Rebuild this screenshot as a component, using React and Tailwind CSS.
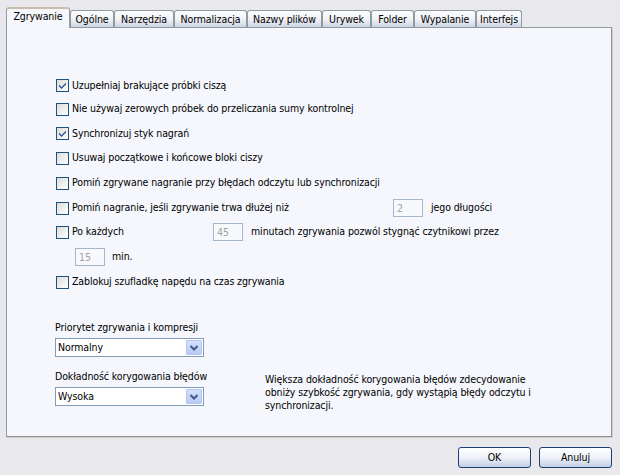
import React from "react";

const FONT = "font-['DejaVu_Sans_Condensed','Liberation_Sans','Arial',sans-serif]";

function Check({ checked }) {
  return (
    <div className="w-[13px] h-[13px] shrink-0 border border-[#1c5180] bg-linear-to-br from-[#dcdcd7] to-[#ffffff] flex items-center justify-center">
      {checked && (
        <svg width="9" height="9" viewBox="0 0 9 9">
          <path d="M1 3.5 L3.5 6 L8 1.5 L8 3.5 L3.5 8 L1 5.5 Z" fill="#2d5a91" />
        </svg>
      )}
    </div>
  );
}

function CheckRow({ checked, label, h }) {
  return (
    <div className={`flex items-center ${h}`}>
      <Check checked={checked} />
      <span className="ml-[3px]">{label}</span>
    </div>
  );
}

function NumBox({ value }) {
  return (
    <div className="w-[30px] h-[18px] shrink-0 border border-[#a5b6cc] bg-[#f8f9fd] text-[#a3a3a3] pl-[3px] flex items-center leading-none">
      {value}
    </div>
  );
}

function Select({ value }) {
  return (
    <div className="w-[149px] h-[19px] border border-[#7f9db9] bg-white flex items-stretch justify-between">
      <span className="pl-[2px] flex items-center">{value}</span>
      <div className="w-[16px] m-[1px] bg-linear-to-b from-[#d4e0fb] to-[#b9cbf3] border border-[#b4c6ef] rounded-[1px] flex items-center justify-center">
        <svg width="8" height="6" viewBox="0 0 8 6">
          <path d="M0.5 1 L4 4.5 L7.5 1" stroke="#3f5a87" strokeWidth="2" fill="none" />
        </svg>
      </div>
    </div>
  );
}

const tabs = [
  ["Ogólne", "w-[44px]"],
  ["Narzędzia", "w-[60px]"],
  ["Normalizacja", "w-[73px]"],
  ["Nazwy plików", "w-[75px]"],
  ["Urywek", "w-[49px]"],
  ["Folder", "w-[43px]"],
  ["Wypalanie", "w-[62px]"],
  ["Interfejs", "w-[46px]"],
];

function Button({ label }) {
  return (
    <div className="w-[73px] h-[21px] border border-[#1d3f73] rounded-[3px] bg-linear-to-b from-[#ffffff] via-[#eef1f8] to-[#c2cfe5] flex items-center justify-center">
      {label}
    </div>
  );
}

export default function App() {
  return (
    <div className={`w-[620px] h-[475px] bg-[#e9e8ec] text-[10.5px] tracking-[-0.1px] text-black ${FONT} flex flex-col pt-[7px] px-[6px]`}>
      <div className="flex items-end h-[21px] relative z-10">
        <div className="w-[64px] h-[21px] bg-[#f5f7fc] border-x border-[#919b9c] border-t-2 border-t-[#c9bfa8] rounded-t-[3px] flex items-center justify-center pb-[3px]">
          Zgrywanie
        </div>
        {tabs.map(([t, w]) => (
          <div
            key={t}
            className={`${w} h-[17px] mb-[1px] border-x border-t border-[#919b9c] rounded-t-[3px] bg-linear-to-b from-[#fdfdfe] via-[#f1f2f6] to-[#cdd5e4] flex items-center justify-center pt-[1px]`}
          >
            {t}
          </div>
        ))}
      </div>
      <div className="w-[606px] h-[410px] -mt-[1px] border border-[#919b9c] border-r-[#8a9294] border-b-[#8a9294] bg-[#f5f7fc] shadow-[1px_1px_0_#d3d0c8] flex flex-col pl-[49px] pt-[46px]">
        <CheckRow checked label="Uzupełniaj brakujące próbki ciszą" h="h-[23px]" />
        <CheckRow label="Nie używaj zerowych próbek do przeliczania sumy kontrolnej" h="h-[24px]" />
        <CheckRow checked label="Synchronizuj styk nagrań" h="h-[25px]" />
        <CheckRow label="Usuwaj początkowe i końcowe bloki ciszy" h="h-[24px]" />
        <CheckRow label="Pomiń zgrywane nagranie przy błędach odczytu lub synchronizacji" h="h-[26px]" />
        <div className="flex items-center h-[24px]">
          <div className="w-[337px] flex items-center">
            <Check />
            <span className="ml-[3px]">Pomiń nagranie, jeśli zgrywanie trwa dłużej niż</span>
          </div>
          <NumBox value="2" />
          <span className="ml-[8px]">jego długości</span>
        </div>
        <div className="flex items-center h-[24px]">
          <div className="w-[157px] flex items-center">
            <Check />
            <span className="ml-[3px]">Po każdych</span>
          </div>
          <NumBox value="45" />
          <span className="ml-[8px]">minutach zgrywania pozwól stygnąć czytnikowi przez</span>
        </div>
        <div className="flex items-center h-[26px] pl-[19px]">
          <NumBox value="15" />
          <span className="ml-[7px]">min.</span>
        </div>
        <CheckRow label="Zablokuj szufladkę napędu na czas zgrywania" h="h-[24px]" />

        <div className="mt-[26px] flex flex-col">
          <span className="h-[14px] leading-[14px] mb-[4px] -ml-[1px] whitespace-nowrap">Priorytet zgrywania i kompresji</span>
          <div className="-ml-[1px]">
            <Select value="Normalny" />
          </div>
          <div className="flex mt-[12px]">
            <div className="flex flex-col -ml-[1px] w-[149px] shrink-0">
              <span className="h-[14px] leading-[14px] mb-[4px] whitespace-nowrap">Dokładność korygowania błędów</span>
              <Select value="Wysoka" />
            </div>
            <div className="ml-[61px] mt-[4px] leading-[13px] w-[320px] whitespace-nowrap">
              Większa dokładność korygowania błędów zdecydowanie
              <br />
              obniży szybkość zgrywania, gdy wystąpią błędy odczytu i
              <br />
              synchronizacji.
            </div>
          </div>
        </div>
      </div>
      <div className="flex justify-end gap-[8px] mt-[10px] pr-[2px]">
        <Button label="OK" />
        <Button label="Anuluj" />
      </div>
    </div>
  );
}
